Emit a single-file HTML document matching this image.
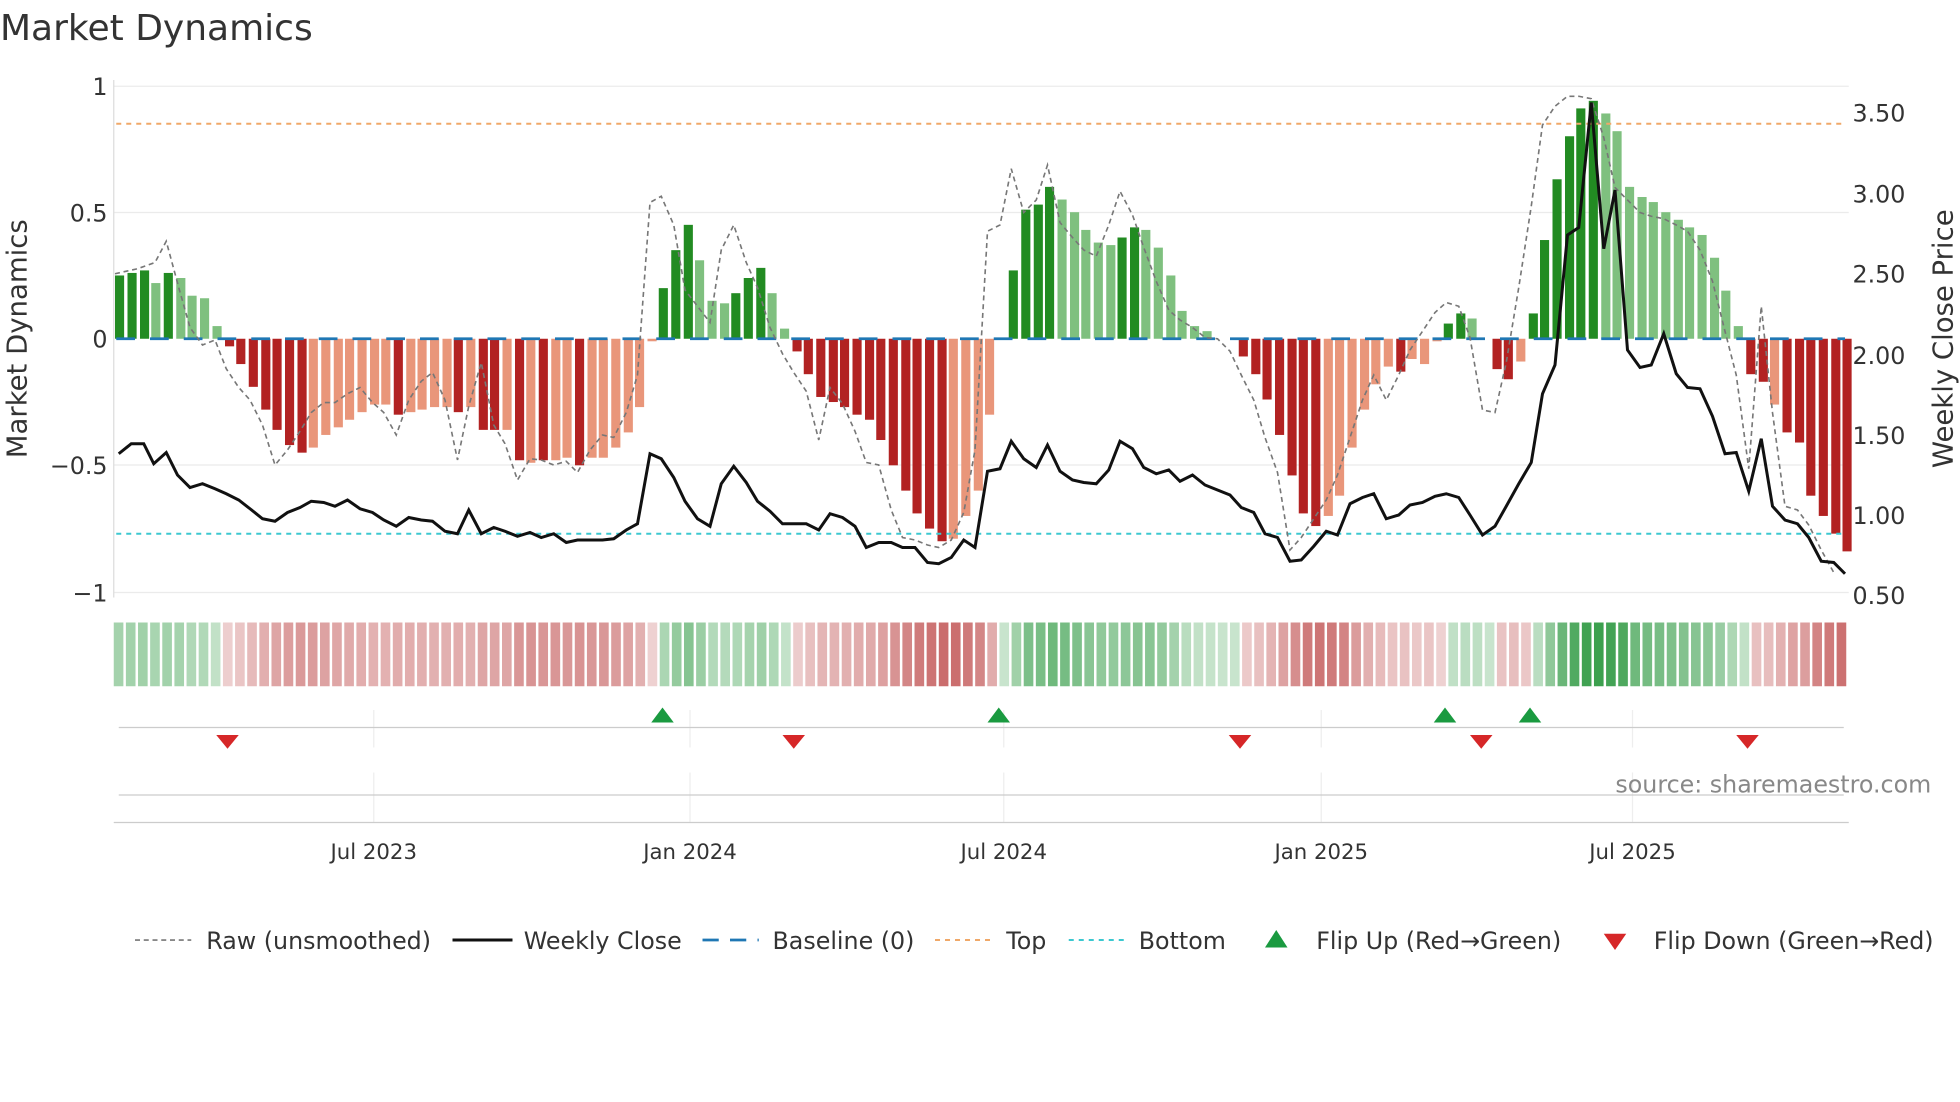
<!DOCTYPE html>
<html><head><meta charset="utf-8"><style>
html,body{margin:0;padding:0;background:#fff;}
svg{display:block;font-family:"DejaVu Sans","Liberation Sans",sans-serif;}
</style></head><body>
<svg id="s" width="1960" height="1102" viewBox="0 0 1568 881.6" xmlns="http://www.w3.org/2000/svg">
<rect width="1568" height="882" fill="#fff"/>
<text x="0" y="32" font-size="28.8" fill="#333">Market Dynamics</text>
<g stroke="#ebebeb" stroke-width="1">
<line x1="91" y1="69" x2="1479" y2="69"/><line x1="91" y1="170" x2="1479" y2="170"/>
<line x1="91" y1="372" x2="1479" y2="372"/><line x1="91" y1="474" x2="1479" y2="474"/>
</g>
<line x1="91" y1="64" x2="91" y2="478" stroke="#ddd"/>
<g font-size="19" fill="#333" text-anchor="end">
<text x="86" y="76">1</text><text x="86" y="177">0.5</text><text x="86" y="278">0</text>
<text x="86" y="379">−0.5</text><text x="86" y="481">−1</text>
</g>
<g font-size="19" fill="#333">
<text x="1482" y="97">3.50</text><text x="1482" y="162">3.00</text><text x="1482" y="226">2.50</text>
<text x="1482" y="291">2.00</text><text x="1482" y="355">1.50</text><text x="1482" y="419">1.00</text><text x="1482" y="483">0.50</text>
</g>
<text transform="translate(21,271) rotate(-90)" font-size="22" fill="#333" text-anchor="middle">Market Dynamics</text>
<text transform="translate(1562,271) rotate(-90)" font-size="22" fill="#333" text-anchor="middle">Weekly Close Price</text>
<g id="bars"></g>
<line x1="93" y1="99" x2="1476" y2="99" stroke="#f0a868" stroke-width="1.6" stroke-dasharray="4 4"/>
<line x1="93" y1="427" x2="1476" y2="427" stroke="#3cc8d0" stroke-width="1.6" stroke-dasharray="4 4"/>
<line x1="93" y1="271" x2="1476" y2="271" stroke="#1f77b4" stroke-width="2.2" stroke-dasharray="15 12"/>
<polyline id="raw" fill="none" stroke="#777" stroke-width="1.3" stroke-dasharray="4 3"/>
<polyline id="close" fill="none" stroke="#111" stroke-width="2.4"/>
<g id="heat"></g>
<g stroke="#eee"><line x1="299" y1="568" x2="299" y2="598"/><line x1="552" y1="568" x2="552" y2="598"/><line x1="803" y1="568" x2="803" y2="598"/><line x1="1057" y1="568" x2="1057" y2="598"/><line x1="1306" y1="568" x2="1306" y2="598"/>
<line x1="299" y1="618" x2="299" y2="658"/><line x1="552" y1="618" x2="552" y2="658"/><line x1="803" y1="618" x2="803" y2="658"/><line x1="1057" y1="618" x2="1057" y2="658"/><line x1="1306" y1="618" x2="1306" y2="658"/></g>
<line x1="95" y1="582" x2="1475" y2="582" stroke="#ccc"/>
<line x1="95" y1="636" x2="1475" y2="636" stroke="#ccc"/>
<line x1="91" y1="658" x2="1479" y2="658" stroke="#ccc"/>
<g id="mk"></g>
<text x="1545" y="634" font-size="19" fill="#888" text-anchor="end">source: sharemaestro.com</text>
<g font-size="17" fill="#333" text-anchor="middle">
<text x="299" y="687">Jul 2023</text><text x="552" y="687">Jan 2024</text><text x="803" y="687">Jul 2024</text><text x="1057" y="687">Jan 2025</text><text x="1306" y="687">Jul 2025</text>
</g>
<g font-size="19" fill="#333">
<line x1="108" y1="752" x2="153" y2="752" stroke="#777" stroke-width="1.3" stroke-dasharray="4 3"/><text x="165" y="759">Raw (unsmoothed)</text>
<line x1="362" y1="752" x2="410" y2="752" stroke="#111" stroke-width="2.4"/><text x="419" y="759">Weekly Close</text>
<line x1="562" y1="752" x2="607" y2="752" stroke="#1f77b4" stroke-width="2.2" stroke-dasharray="13 9"/><text x="618" y="759">Baseline (0)</text>
<line x1="748" y1="752" x2="793" y2="752" stroke="#f0a868" stroke-width="1.6" stroke-dasharray="4 4"/><text x="805" y="759">Top</text>
<line x1="855" y1="752" x2="900" y2="752" stroke="#3cc8d0" stroke-width="1.6" stroke-dasharray="4 4"/><text x="911" y="759">Bottom</text>
<polygon points="1012,758 1030,758 1021,744" fill="#1a9a40"/><text x="1053" y="759">Flip Up (Red→Green)</text>
<polygon points="1283,747 1301,747 1292,760" fill="#d62728"/><text x="1323" y="759">Flip Down (Green→Red)</text>
</g>
</svg>
<script>
var B=[[92,.25,'G'],[102,.26,'G'],[112,.27,'G'],[121,.22,'g'],[131,.26,'G'],[141,.24,'g'],[150,.17,'g'],[160,.16,'g'],[170,.05,'g'],
[180,-.03,'R'],[189,-.1,'R'],[199,-.19,'R'],[209,-.28,'R'],[218,-.36,'R'],[228,-.42,'R'],[238,-.45,'R'],[247,-.43,'r'],[257,-.38,'r'],[267,-.35,'r'],[276,-.32,'r'],[286,-.29,'r'],[296,-.26,'r'],[305,-.26,'r'],[315,-.3,'R'],[325,-.29,'r'],[334,-.28,'r'],[344,-.27,'r'],[354,-.27,'r'],[363,-.29,'R'],[373,-.27,'r'],[383,-.36,'R'],[392,-.36,'R'],[402,-.36,'r'],[412,-.48,'R'],[421,-.49,'r'],[431,-.48,'R'],[441,-.48,'r'],[450,-.47,'r'],[460,-.5,'R'],[470,-.47,'r'],[479,-.47,'r'],[489,-.43,'r'],[499,-.37,'r'],[508,-.27,'r'],[518,-.01,'r'],
[527,.2,'G'],[537,.35,'G'],[547,.45,'G'],[556,.31,'g'],[566,.15,'g'],[576,.14,'g'],[585,.18,'G'],[595,.24,'G'],[605,.28,'G'],[614,.18,'g'],[624,.04,'g'],
[634,-.05,'R'],[643,-.14,'R'],[653,-.23,'R'],[663,-.25,'R'],[672,-.27,'R'],[682,-.3,'R'],[692,-.32,'R'],[701,-.4,'R'],[711,-.5,'R'],[721,-.6,'R'],[730,-.69,'R'],[740,-.75,'R'],[750,-.8,'R'],[759,-.79,'r'],[769,-.7,'r'],[779,-.6,'r'],[788,-.3,'r'],
[807,.27,'G'],[817,.51,'G'],[827,.53,'G'],[836,.6,'G'],[846,.55,'g'],[856,.5,'g'],[865,.43,'g'],[875,.38,'g'],[885,.37,'g'],[894,.4,'G'],[904,.44,'G'],[913,.43,'g'],[923,.36,'g'],[933,.25,'g'],[942,.11,'g'],[952,.05,'g'],[962,.03,'g'],
[991,-.07,'R'],[1001,-.14,'R'],[1010,-.24,'R'],[1020,-.38,'R'],[1030,-.54,'R'],[1039,-.69,'R'],[1049,-.74,'R'],[1059,-.7,'r'],[1068,-.62,'r'],[1078,-.43,'r'],[1088,-.28,'r'],[1097,-.18,'r'],[1107,-.11,'r'],[1117,-.13,'R'],[1126,-.08,'r'],[1136,-.1,'r'],[1146,-.01,'r'],
[1155,.06,'G'],[1165,.1,'G'],[1174,.08,'g'],[1194,-.12,'R'],[1203,-.16,'R'],[1213,-.09,'r'],
[1223,.1,'G'],[1232,.39,'G'],[1242,.63,'G'],[1252,.8,'G'],[1261,.91,'G'],[1271,.94,'G'],[1281,.89,'g'],[1290,.82,'g'],[1300,.6,'g'],[1310,.56,'g'],[1319,.54,'g'],[1329,.5,'g'],[1339,.47,'g'],[1348,.44,'g'],[1358,.41,'g'],[1368,.32,'g'],[1377,.19,'g'],[1387,.05,'g'],
[1397,-.14,'R'],[1407,-.17,'R'],[1416,-.26,'r'],[1426,-.37,'R'],[1436,-.41,'R'],[1445,-.62,'R'],[1455,-.7,'R'],[1465,-.77,'R'],[1474,-.84,'R']];
var C={G:'#228b22',g:'#7fc07f',R:'#b22222',r:'#e9967a'};
var ns='http://www.w3.org/2000/svg',bars=document.getElementById('bars'),heat=document.getElementById('heat');
function el(p,t,a){var e=document.createElementNS(ns,t);for(var k in a)e.setAttribute(k,a[k]);p.appendChild(e);return e;}
function mix(c,t){var w=[255,255,255];return 'rgb('+c.map(function(v,i){return Math.round(w[i]+(v-w[i])*t)}).join(',')+')';}
B.forEach(function(b){var y=271-b[1]*202.5;el(bars,'rect',{x:b[0],y:Math.min(y,271),width:7.3,height:Math.abs(271-y),fill:C[b[2]]});});
var step=1388/143;
for(var i=0;i<143;i++){var x=91+i*step;var best=null,d=1e9;B.forEach(function(b){var dd=Math.abs(b[0]-x);if(dd<d){d=dd;best=b;}});
var v=d<6?best[1]:0.01;var col=v>=0?mix([40,150,60],0.25+Math.min(v,1)*0.7):mix([190,75,75],0.25+Math.min(-v,1)*0.7);
el(heat,'rect',{x:x,y:498,width:step-2,height:51,fill:col});}
var cl="95,363 105,355 115,355 123,371 133,362 142,380 152,390 162,387 172,391 181,395 191,400 200,407 210,415 220,417 230,410 240,406 249,401 259,402 268,405 278,400 288,407 298,410 307,416 317,421 327,414 337,416 346,417 356,425 366,427 375,408 385,427 395,422 404,425 414,429 424,426 433,430 443,427 453,434 462,432 472,432 482,432 491,431 501,424 510,419 520,363 529,367 539,382 548,401 558,415 568,421 577,387 587,373 597,386 606,401 616,409 626,419 635,419 645,419 655,424 664,411 674,414 684,421 693,438 703,434 713,434 722,438 732,438 742,450 751,451 761,446 771,432 780,438 790,377 800,375 809,353 819,367 829,374 838,356 848,377 858,384 867,386 877,387 887,376 896,353 906,359 915,374 925,379 935,376 944,385 954,380 964,388 974,392 984,396 993,406 1003,410 1012,427 1022,430 1032,449 1041,448 1051,437 1061,425 1070,428 1080,403 1090,398 1099,395 1109,415 1119,412 1128,404 1138,402 1148,397 1157,395 1167,398 1176,412 1186,428 1196,421 1205,405 1215,387 1225,370 1234,315 1244,292 1254,188 1263,182 1273,82 1283,199 1292,152 1302,280 1312,294 1321,292 1331,267 1341,299 1350,310 1360,311 1370,333 1380,363 1389,362 1399,393 1409,351 1418,405 1428,416 1438,419 1447,430 1457,449 1467,450 1476,459";
document.getElementById('close').setAttribute('points',cl);
var rw="92,219 110,215 124,210 133,193 143,230 152,262 162,276 172,272 181,295 191,310 200,320 210,340 220,372 230,360 240,345 249,330 259,322 268,322 278,315 288,310 298,322 307,330 317,348 327,320 337,305 346,298 356,320 366,368 375,325 385,290 395,340 404,355 414,384 424,367 433,368 443,372 453,369 462,378 472,360 482,348 491,350 501,330 510,300 520,162 529,157 539,180 548,232 558,245 568,258 577,200 587,180 597,210 606,230 616,262 626,283 635,298 645,313 655,352 664,310 674,323 684,345 693,370 703,372 713,408 722,430 732,432 742,436 751,438 761,432 771,410 780,360 790,185 800,180 809,135 819,170 829,160 838,132 848,178 858,190 867,200 877,205 887,180 896,153 906,172 915,198 925,225 935,248 944,256 954,262 964,270 974,271 984,281 993,300 1003,320 1012,350 1022,378 1032,440 1041,430 1051,415 1061,400 1070,380 1080,350 1090,320 1099,300 1109,320 1119,300 1128,280 1138,265 1148,250 1157,242 1167,245 1176,270 1186,328 1196,330 1205,290 1215,230 1225,165 1234,100 1244,85 1254,77 1263,77 1273,79 1283,110 1292,150 1302,160 1312,170 1321,173 1331,175 1341,180 1350,185 1360,200 1370,225 1380,265 1389,300 1399,375 1409,245 1418,330 1428,405 1438,408 1447,420 1457,440 1467,458";
document.getElementById('raw').setAttribute('points',rw);
var mk=document.getElementById('mk');
[530,799,1156,1224].forEach(function(x){el(mk,'polygon',{points:(x-9)+',578 '+(x+9)+',578 '+x+',566',fill:'#1a9a40'});});
[182,635,992,1185,1398].forEach(function(x){el(mk,'polygon',{points:(x-9)+',588 '+(x+9)+',588 '+x+',599',fill:'#d62728'});});
</script>
</body></html>
